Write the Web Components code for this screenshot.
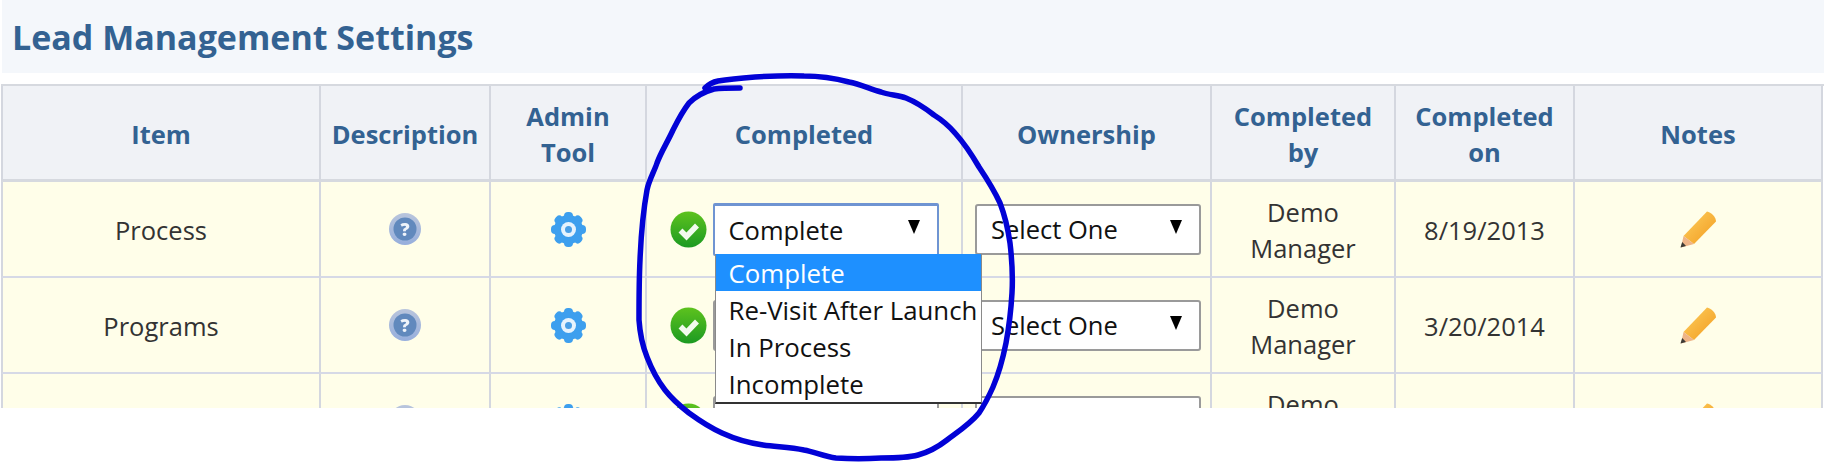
<!DOCTYPE html>
<html>
<head>
<meta charset="utf-8">
<title>Lead Management Settings</title>
<style>
  html, body { margin: 0; background: #fff; }
</style>
</head>
<body>
<lead-settings-page></lead-settings-page>

<script>
// Column widths, shared by the header and the rows through a custom property
const COLUMNS = "318px 170px 156px 316px 249px 184px 179px 250px";

const ICONS = {
  help: `<svg width="32" height="32" viewBox="0 0 32 32">
    <defs><linearGradient id="h" x1="0" y1="0" x2="0" y2="1"><stop offset="0" stop-color="#b9c5dc"/><stop offset="1" stop-color="#96aedc"/></linearGradient></defs>
    <circle cx="16" cy="16" r="16" fill="url(#h)"/>
    <circle cx="16" cy="16" r="11.500" fill="#6189bd"/>
    <text x="16" y="22.500" text-anchor="middle" font-family="Open Sans, sans-serif" font-weight="800" font-size="18" fill="#eef3fa">?</text>
  </svg>`,
  gear: `<svg width="37" height="37" viewBox="0 0 37 37">
    <g fill="#3d9fee">
      <circle cx="18.500" cy="18.500" r="14.500"/>
      <rect x="14" y="1" width="9" height="35" rx="4"/>
      <rect x="14" y="1" width="9" height="35" rx="4" transform="rotate(45 18.500 18.500)"/>
      <rect x="14" y="1" width="9" height="35" rx="4" transform="rotate(90 18.500 18.500)"/>
      <rect x="14" y="1" width="9" height="35" rx="4" transform="rotate(135 18.500 18.500)"/>
    </g>
    <circle cx="18.500" cy="18.500" r="7.500" fill="#e6f3fd"/>
    <circle cx="18.500" cy="18.500" r="3.500" fill="#4a9fe6"/>
  </svg>`,
  check: `<svg width="37" height="37" viewBox="0 0 37 37">
    <defs><linearGradient id="c" x1="0" y1="0" x2="0" y2="1"><stop offset="0" stop-color="#5dc21e"/><stop offset="1" stop-color="#1c9a22"/></linearGradient></defs>
    <circle cx="18.500" cy="18.500" r="18" fill="url(#c)"/>
    <path d="M10.500 19.500l6 6 10.500-11" fill="none" stroke="#f2fbee" stroke-width="5.500"/>
  </svg>`,
  pencil: `<svg width="37" height="37" viewBox="0 0 37 37">
    <defs><linearGradient id="p" x1="0" y1="0" x2="1" y2="1"><stop offset="0" stop-color="#fdd060"/><stop offset="1" stop-color="#f29a1e"/></linearGradient></defs>
    <path d="M27 .5C31 1 36 6 36 10.500L14 33 3.500 25z" fill="url(#p)"/>
    <path d="M3.500 25L14 33 1 36.500z" fill="#eeb488"/>
    <path d="M2.200 31L6 35 .5 36.500z" fill="#3c3a36"/>
  </svg>`,
};

class LeadTitle extends HTMLElement {
  constructor() {
    super();
    this.attachShadow({ mode: "open" }).innerHTML = `
      <style>
        :host {
          display: flex;
          align-items: center;
          height: 73px;
          margin-left: 2px;
          padding-left: 10px;
          background: #f4f7fb;
          color: #336292;
          font: 700 34px "Open Sans", sans-serif;
        }
      </style>
      <slot></slot>
    `;
  }
}

class LeadIcon extends HTMLElement {
  constructor() {
    super();
    this.attachShadow({ mode: "open" });
  }
  connectedCallback() {
    this.shadowRoot.innerHTML = `
      <style>
        :host { display: inline-flex; filter: blur(0.5px); }
      </style>
      ${ICONS[this.getAttribute("name")]}
    `;
  }
}

// Looks like a native select; the "open" attribute drops the option list
class LeadSelect extends HTMLElement {
  constructor() {
    super();
    this.attachShadow({ mode: "open" });
  }
  connectedCallback() {
    const open = this.hasAttribute("open");
    const options = (this.getAttribute("options") || "").split("|").filter(Boolean);
    const menu = open
      ? `<div class="menu">${options
          .map((o) => `<div class="${o === this.getAttribute("value") ? "sel" : ""}">${o}</div>`)
          .join("")}</div>`
      : "";
    this.shadowRoot.innerHTML = `
      <style>
        :host {
          display: block;
          position: relative;
          font-size: 25.500px;
          color: #111;
          text-align: left;
        }
        .box {
          box-sizing: border-box;
          display: flex;
          align-items: center;
          justify-content: space-between;
          width: var(--select-width, 224px);
          height: 51px;
          padding: 0 17px 0 14px;
          background: #fff;
          border: 2px solid #9a9a9a;
          border-radius: 3px;
          white-space: nowrap;
        }
        :host([open]) .box {
          height: 53px;
          border: 2px solid #6f94d2;
          border-top-width: 3px;
          border-radius: 2px;
        }
        .arrow {
          width: 0;
          height: 0;
          margin-top: -5px;
          border-left: 6.500px solid transparent;
          border-right: 6.500px solid transparent;
          border-top: 14px solid #000;
        }
        .menu {
          box-sizing: border-box;
          position: absolute;
          z-index: 5;
          left: 2px;
          top: 51px;
          width: 267px;
          height: 150px;
          background: #fff;
          border: 1px solid #8a8a8a;
          border-top: 0;
          border-bottom: 2px solid #333;
          line-height: 39px;
          font-size: 25.800px;
          white-space: nowrap;
        }
        .menu div { height: 37px; padding-left: 13px; }
        .menu .sel { background: #1e90ff; color: #fff; }
      </style>
      <div class="box"><span>${this.getAttribute("value")}</span><span class="arrow"></span></div>
      ${menu}
    `;
  }
}

class LeadRow extends HTMLElement {
  constructor() {
    super();
    this.attachShadow({ mode: "open" }).innerHTML = `
      <style>
        :host {
          display: grid;
          grid-template-columns: var(--columns);
          height: 96px;
        }
      </style>
      <slot></slot>
    `;
  }
}

class LeadCell extends HTMLElement {
  constructor() {
    super();
    this.attachShadow({ mode: "open" }).innerHTML = `
      <style>
        :host {
          box-sizing: border-box;
          display: flex;
          align-items: center;
          justify-content: center;
          gap: 6px;
          border-left: 2px solid #d4d7df;
          border-bottom: 2px solid #d6d9e6;
          background: #fffee9;
          text-align: center;
          line-height: 36px;
          font-size: 25.500px;
          color: #333;
        }
        :host([text]) { padding-top: 2px; }
        :host([pad]) { padding-left: 3px; }
        :host([head]) {
          background: #f0f2f6;
          color: #336292;
          font-weight: 700;
          font-size: 25.500px;
          padding-top: 2px;
          border-bottom-width: 3px;
          border-bottom-color: #d6d9df;
        }
        :host([last]) { border-right: 2px solid #d4d7df; }
      </style>
      <slot></slot>
    `;
  }
}

class LeadTable extends HTMLElement {
  constructor() {
    super();
    this.attachShadow({ mode: "open" });
  }
  connectedCallback() {
    const heads = ["Item", "Description", "Admin<br>Tool", "Completed", "Ownership", "Completed<br>by", "Completed<br>on", "Notes"];
    const statuses = "Complete|Re-Visit After Launch|In Process|Incomplete";
    const rows = [
      { item: "Process", date: "8/19/2013", open: true },
      { item: "Programs", date: "3/20/2014" },
      { item: "", date: "" }, // cut off by the bottom of the frame
    ];

    const head = heads
      .map((h, i) => `<lead-cell head ${i === 7 ? "last" : ""}><span>${h}</span></lead-cell>`)
      .join("");

    const body = rows
      .map((r) => `
        <lead-row>
          <lead-cell text>${r.item}</lead-cell>
          <lead-cell><lead-icon name="help"></lead-icon></lead-cell>
          <lead-cell><lead-icon name="gear"></lead-icon></lead-cell>
          <lead-cell>
            <lead-icon name="check"></lead-icon>
            <lead-select value="Complete" options="${statuses}" ${r.open ? "open" : ""}></lead-select>
          </lead-cell>
          <lead-cell pad><lead-select value="Select One"></lead-select></lead-cell>
          <lead-cell text><span>Demo<br>Manager</span></lead-cell>
          <lead-cell text>${r.date}</lead-cell>
          <lead-cell last><lead-icon name="pencil"></lead-icon></lead-cell>
        </lead-row>`)
      .join("");

    this.shadowRoot.innerHTML = `
      <style>
        :host {
          display: block;
          --columns: ${COLUMNS};
          --select-width: 226px;
          height: 324px;
          margin: 11px 0 0 1px;
          overflow: hidden;
          border-top: 2px solid #d6d9df;
          box-sizing: border-box;
        }
      </style>
      <lead-row>${head}</lead-row>
      ${body}
    `;
  }
}

// The hand drawn circle somebody put on top of the screenshot
class LeadInk extends HTMLElement {
  constructor() {
    super();
    this.attachShadow({ mode: "open" }).innerHTML = `
      <style>
        :host { position: absolute; inset: 0; pointer-events: none; z-index: 10; }
        svg { display: block; }
      </style>
      <svg width="1824" height="462" viewBox="0 0 1824 462">
        <path fill="none" stroke="#0202d6" stroke-width="5.500" stroke-linecap="round" stroke-linejoin="round"
          d="M740 88C730 88 722 88 714 89C703 92 695 97 689 103C682 112 678 120 673 130C667 143 661 152 657 163C654 172 649 180 647 190C643 212 641 236 640 260C639 280 639 300 639 320C640 335 643 347 647 357C652 370 658 381 665 390C672 399 680 406 689 413C700 421 711 428 722 433C735 439 749 443 763 445C777 447 790 447 804 450C815 452 825 457 836 458C851 459 866 459 881 458C894 458 907 458 918 455C929 452 938 447 947 440C959 431 970 424 979 413C985 404 989 396 993 387C999 373 1003 358 1006 343C1009 327 1011 310 1012 293C1013 276 1012 260 1010 243C1008 229 1005 216 1000 203C994 190 987 179 979 167C972 155 964 143 955 133C949 126 942 120 934 115C925 108 916 102 906 98C898 95 889 95 881 92C870 89 860 84 849 82C834 78 819 76 804 76C788 75 771 76 755 77C742 78 730 79 718 81C713 82 708 85 705 88"/>
      </svg>
    `;
  }
}

class LeadSettingsPage extends HTMLElement {
  constructor() {
    super();
    this.attachShadow({ mode: "open" }).innerHTML = `
      <style>
        :host {
          display: block;
          position: relative;
          height: 462px;
          font-family: "Open Sans", sans-serif;
        }
      </style>
      <lead-title>Lead Management Settings</lead-title>
      <lead-table></lead-table>
      <lead-ink></lead-ink>
    `;
  }
}

customElements.define("lead-title", LeadTitle);
customElements.define("lead-icon", LeadIcon);
customElements.define("lead-select", LeadSelect);
customElements.define("lead-row", LeadRow);
customElements.define("lead-cell", LeadCell);
customElements.define("lead-table", LeadTable);
customElements.define("lead-ink", LeadInk);
customElements.define("lead-settings-page", LeadSettingsPage);
</script>
</body>
</html>
